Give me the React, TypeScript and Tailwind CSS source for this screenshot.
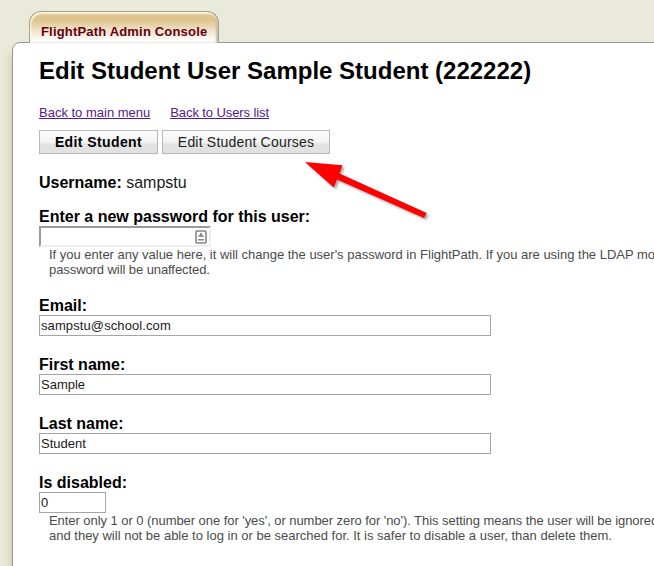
import React from "react";

function Field({ label, value, inputClass }: { label: string; value: string; inputClass: string }) {
  return (
    <div>
      <div className="h-[19px] whitespace-nowrap text-[16px] leading-[20px] font-bold">{label}</div>
      <input
        type="text"
        defaultValue={value}
        className={`block h-[21px] border border-[#a5a5a5] bg-white px-px text-[13px] text-[#1a1a1a] outline-none ${inputClass}`}
      />
    </div>
  );
}

function Help({ children }: { children: React.ReactNode }) {
  return (
    <div className="ml-[10px] text-[13px] leading-[15px] whitespace-nowrap text-[#4b4b4b]">{children}</div>
  );
}

export default function App() {
  return (
    <div className="relative h-[566px] w-[654px] overflow-hidden bg-[#eaeadb] pt-[11px] font-['Liberation_Sans',Arial,sans-serif] text-black">
      <div className="relative z-10 ml-[29px] flex h-[32px] w-[190px] items-start rounded-t-[12px] border border-b-0 border-[#a3a190] bg-[linear-gradient(#dcc184,#dfc690_28%,#efe2c8_58%,#ffffff_95%)] pt-[12px] pl-[11px] shadow-[inset_1px_2px_2px_#fff8e8,inset_-2px_0_2px_#cbbba0]">
        <span className="whitespace-nowrap text-[13px] leading-[15px] font-bold tracking-[0.18px] text-[#660013]">FlightPath Admin Console</span>
      </div>
      <div className="-mt-px ml-[12px] h-[600px] w-[680px] rounded-tl-[8px] border border-[#989888] bg-white pt-[14px] pl-[26px] shadow-[-2px_10px_10px_#d2c9b0]">
        <h1 className="h-[48px] whitespace-nowrap text-[24px] leading-[28px] font-bold">Edit Student User Sample Student (222222)</h1>
        <div className="flex h-[25px] gap-5 text-[13px] leading-[15px] whitespace-nowrap text-[#551a8b] underline">
          <a>Back to main menu</a>
          <a className="tracking-[-0.1px]">Back to Users list</a>
        </div>
        <div className="flex h-[43px] gap-1">
          <button className="h-6 w-[119px] border border-[#b8b8b8] bg-[linear-gradient(#fdfdfd,#f2f2f2_54%,#e4e4e4_58%,#e0e0e0)] text-[14px] font-bold tracking-[0.4px] whitespace-nowrap">Edit Student</button>
          <button className="h-6 w-[168px] border border-[#b8b8b8] bg-[linear-gradient(#fdfdfd,#f2f2f2_54%,#e4e4e4_58%,#e0e0e0)] text-[14px] tracking-[0.2px] whitespace-nowrap text-[#222]">Edit Student Courses</button>
        </div>
        <div className="h-[34px] text-[16px] leading-[20px]">
          <b>Username:</b> <span className="text-[#1a1a1a]">sampstu</span>
        </div>
        <div className="h-[19px] text-[16px] leading-[20px] font-bold">Enter a new password for this user:</div>
        <div className="flex h-[21px] w-[172px] items-center justify-end border-2 border-[#eeeeee] border-t-[#9a9a9a] border-l-[#9a9a9a] pr-[2px]">
          <svg width="12" height="14" viewBox="0 0 12 14" fill="none">
            <rect x="1" y="1" width="10" height="12" rx="1" stroke="#858585" strokeWidth="1.6" />
            <path d="M5 3h2v2h1.5v2h-5V5H5zM3 9h6v1.5H3z" fill="#8c8c8c" />
          </svg>
        </div>
        <Help>
          <div className="tracking-[-0.01px]">If you enter any value here, it will change the user's password in FlightPath. If you are using the LDAP module, their</div>
          <div className="tracking-[-0.08px]">password will be unaffected.</div>
        </Help>
        <div className="mt-[19px] flex flex-col gap-[19px]">
          <Field label="Email:" value="sampstu@school.com" inputClass="w-[452px] tracking-[0.1px]" />
          <Field label="First name:" value="Sample" inputClass="w-[452px]" />
          <Field label="Last name:" value="Student" inputClass="w-[452px]" />
          <Field label="Is disabled:" value="0" inputClass="w-[67px]" />
        </div>
        <Help>
          <div className="tracking-[-0.055px]">Enter only 1 or 0 (number one for 'yes', or number zero for 'no'). This setting means the user will be ignored</div>
          <div>and they will not be able to log in or be searched for. It is safer to disable a user, than delete them.</div>
        </Help>
        <div className="mt-[20px] text-[16px] leading-[20px] font-bold">Cumulative hours:</div>
      </div>
      <svg className="absolute top-[155px] left-[298px] z-20 drop-shadow-[2px_2px_1px_rgba(0,0,0,0.35)]" width="136" height="70" viewBox="298 155 136 70">
        <path d="M305 162 342.5 165.3 339.5 173.5 426.7 213 424 218 337 179.5 333.7 187.5Z" fill="#fe0000" />
      </svg>
    </div>
  );
}
